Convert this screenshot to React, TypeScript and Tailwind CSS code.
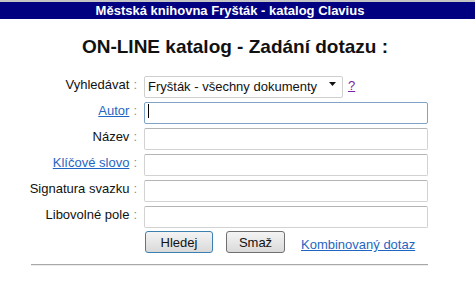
import { useState } from "react";

const font = { fontFamily: '"Liberation Sans", Arial, sans-serif' };

function Label({ text, link }: { text: string; link?: boolean }) {
    return (
        <div className="flex h-[22px] items-center justify-end whitespace-nowrap pr-[4px] text-[13px] text-[#111]">
            {link ? (
                <a href="#" className="text-[#1f66c2] underline">
                    {text}
                </a>
            ) : (
                <span>{text}</span>
            )}
            <span className="ml-[4px] text-[#8c8c8c]">:</span>
        </div>
    );
}

function TextField({ focused }: { focused?: boolean }) {
    return (
        <div className="relative h-[22px]">
            <input
                type="text"
                className={
                    focused
                        ? "h-full w-full rounded-[2px] border border-[#7fa3c9] bg-white px-[3px] text-[13px] outline-none"
                        : "h-full w-full rounded-[2px] border border-[#d2d2d2] border-t-[#b4b4b4] bg-white px-[3px] text-[13px] outline-none"
                }
            />
            {focused && (
                <span className="pointer-events-none absolute left-[4px] top-[4px] h-[14px] w-px bg-black" />
            )}
        </div>
    );
}

export default function App() {
    const [source, setSource] = useState("all");

    const fields = [
        { label: "Autor", link: true, focused: true },
        { label: "Název" },
        { label: "Klíčové slovo", link: true },
        { label: "Signatura svazku" },
        { label: "Libovolné pole" },
    ];

    return (
        <div className="min-h-[281px] w-[475px] bg-white" style={font}>
            <div className="border-t-2 border-[#c4c4c4] bg-[#000080]">
                <div className="h-[17px] pr-[15px] text-center text-[13px] font-bold leading-[17px] text-white">
                    Městská knihovna Fryšták - katalog Clavius
                </div>
            </div>

            <h1 className="mt-[16px] pr-[5px] text-center text-[19px] font-bold leading-[24px] text-[#111]">
                ON-LINE katalog - Zadání dotazu :
            </h1>

            <div className="ml-[31px] mt-[15px] w-[397px]">
                <div className="grid grid-cols-[110px_284px] gap-x-[3px] gap-y-[4px]">
                    <Label text="Vyhledávat" />
                    <div className="flex h-[22px] items-center">
                        <div className="relative h-[22px] w-[199px]">
                            <select
                                value={source}
                                onChange={(e) => setSource(e.target.value)}
                                className="h-full w-full appearance-none rounded-[2px] border border-[#cfcfcf] bg-white pl-[3px] text-[13px] text-[#111] outline-none"
                            >
                                <option value="all">Fryšták - všechny dokumenty</option>
                            </select>
                            <svg
                                className="pointer-events-none absolute right-[7px] top-[8px]"
                                width="7"
                                height="4"
                                viewBox="0 0 7 4"
                            >
                                <path d="M0 0h7L3.5 4z" fill="#111" />
                            </svg>
                        </div>
                        <a href="#" className="ml-[5px] mt-[2px] text-[13px] text-[#7a1fa2] underline">
                            ?
                        </a>
                    </div>

                    {fields.map((f) => (
                        <div key={f.label} className="contents">
                            <Label text={f.label} link={f.link} />
                            <TextField focused={f.focused} />
                        </div>
                    ))}

                    <div />
                    <div className="flex items-center pl-[1px]">
                        <button className="h-[22px] w-[68px] rounded-[3px] border border-[#3c7fb1] bg-linear-to-b from-[#f4f4f4] to-[#d9d9d9] text-[13px] text-[#111]">
                            Hledej
                        </button>
                        <button className="ml-[13px] h-[22px] w-[59px] rounded-[3px] border border-[#707070] bg-linear-to-b from-[#f4f4f4] to-[#dadada] text-[13px] text-[#111]">
                            Smaž
                        </button>
                        <a href="#" className="ml-[16px] mt-[5px] text-[13px] text-[#1f66c2] underline">
                            Kombinovaný dotaz
                        </a>
                    </div>
                </div>

                <div className="mt-[9px] border-t border-b border-t-[#a8a8a8] border-b-[#ececec]" />
            </div>
        </div>
    );
}
